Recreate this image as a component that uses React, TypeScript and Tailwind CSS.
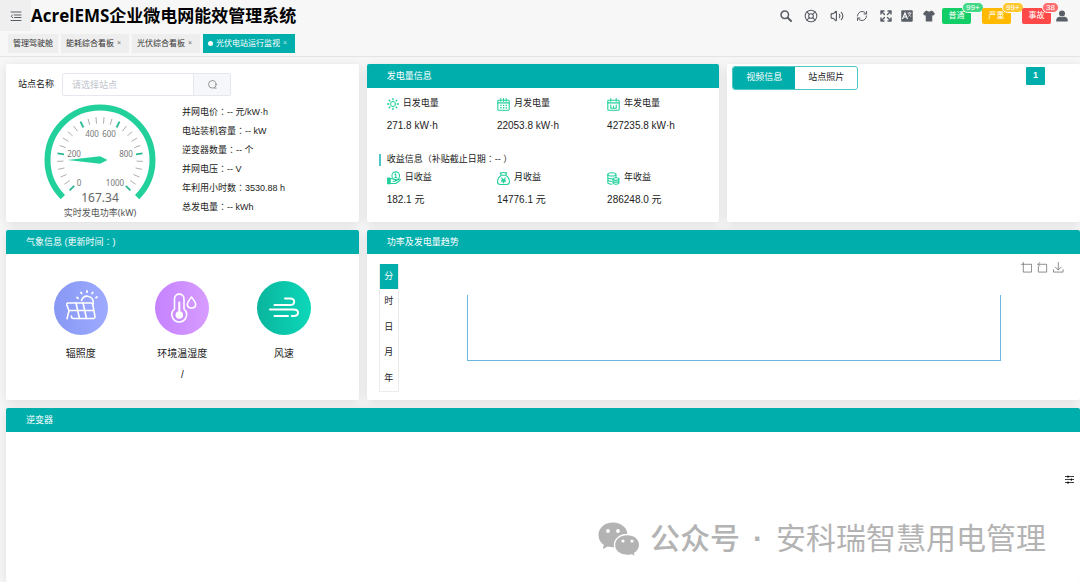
import { useState } from "react";
import type { ReactNode } from "react";
import { LifeBuoy, RefreshCw, Volume2 } from "lucide-react";
import clsx from "clsx";

const TABS = [
  { name: "管理驾驶舱", closable: false },
  { name: "能耗综合看板", closable: true },
  { name: "光伏综合看板", closable: true },
  { name: "光伏电站运行监视", closable: true },
];

const ALARMS = [
  { name: "普通", count: "99+", tag: "bg-[#13ce66]", badge: "bg-[#42d885]" },
  { name: "严重", count: "99+", tag: "bg-[#ffba00]", badge: "bg-[#ffc833]" },
  { name: "事故", count: "38", tag: "bg-[#ff4949]", badge: "bg-[#ff6d6d]" },
];

const STATION_INFO = [
  { label: "并网电价", value: "-- 元/kW·h" },
  { label: "电站装机容量", value: "-- kW" },
  { label: "逆变器数量", value: "-- 个" },
  { label: "并网电压", value: "-- V" },
  { label: "年利用小时数", value: "3530.88 h" },
  { label: "总发电量", value: "-- kWh" },
];

const PERIODS = ["分", "时", "日", "月", "年"];

function Svg({ box = 24, className, width = 2, children }: { box?: number; className: string; width?: number; children: ReactNode }) {
  return (
    <svg
      viewBox={`0 0 ${box} ${box}`}
      className={clsx("shrink-0", className)}
      fill="none"
      stroke="currentColor"
      strokeWidth={width}
      strokeLinecap="round"
      strokeLinejoin="round"
      aria-hidden="true"
    >
      {children}
    </svg>
  );
}

const SearchIcon = () => (
  <Svg className="size-3" width={3}>
    <circle cx="9.5" cy="9.5" r="7.5" />
    <path d="M15.500 15.500l6.500 6.500" strokeWidth="4" />
  </Svg>
);

const FullscreenIcon = () => (
  <Svg className="size-3" width={2.8}>
    <path d="M2 8V2h6M2 2l7 7M16 2h6v6M22 2l-7 7M2 16v6h6M2 22l7-7M22 16v6h-6M22 22l-7-7" />
  </Svg>
);

const LanguageIcon = () => (
  <svg viewBox="0 0 24 24" className="size-3" aria-hidden="true">
    <rect x="0.5" y="0.5" width="23" height="23" rx="2" fill="currentColor" />
    <path d="M3 18L8 6l5 12M5 14h6" fill="none" stroke="#fff" strokeWidth="2.4" />
    <path d="M13 6h8M17 4v2M19.500 6c-1 4-3 6-5 7M14.500 6.500c1 3 3 5.500 6 6.500" fill="none" stroke="#fff" strokeWidth="1.300" />
  </svg>
);

const ShirtIcon = () => (
  <svg viewBox="0 0 24 24" className="size-3" fill="currentColor" aria-hidden="true">
    <path d="M8 1c1 2.600 7 2.600 8 0l4 1.500L24 8l-4 3.500-1.500-1V23h-13V10.500l-1.500 1L0 8l4-5.500z" />
  </svg>
);

const UserIcon = () => (
  <svg viewBox="0 0 24 24" className="size-3" fill="currentColor" aria-hidden="true">
    <circle cx="12" cy="7" r="6" />
    <path d="M0.500 23v-3c0-4 3-6.500 7-6.500 3 1.300 6 1.300 9 0 4 0 7 2.500 7 6.500v3z" />
  </svg>
);

const SunIcon = () => (
  <Svg className="size-3">
    <circle cx="12" cy="12" r="5" />
    <path d="M12 1v2.500M12 20.500V23M1 12h2.500M20.500 12H23M4.200 4.200l1.800 1.800M18 18l1.800 1.800M4.200 19.800L6 18M18 6l1.800-1.800" strokeWidth="2.600" />
  </Svg>
);

const MonthIcon = () => (
  <Svg className="size-[13px]">
    <rect x="1.500" y="4" width="21" height="18.500" rx="1.500" />
    <path d="M1.500 9h21M7 1v5M12 1v5M17 1v5" />
    <path d="M6 13.500h2.500M11 13.500h2.500M16 13.500h2.500M6 18h2.500M11 18h2.500M16 18h2.500" strokeLinecap="butt" strokeWidth="2.500" />
  </Svg>
);

const YearIcon = () => (
  <Svg className="size-[13px]">
    <rect x="1.500" y="4" width="21" height="18.500" rx="1.500" />
    <path d="M1.500 9h21M7 1v5M17 1v5M7 13v6M12 15v4M17 13v6M7 19h10" />
  </Svg>
);

const DayIncomeIcon = () => (
  <Svg className="size-[14px]" width={1.8}>
    <circle cx="15" cy="8" r="6.500" />
    <path d="M13.500 6l1.500-1v6M13.500 11h3" />
    <rect x="1" y="12" width="4.500" height="10" fill="currentColor" />
    <path d="M5.500 13.500c4-2 5 1.500 8 1.500 2 0 2 2.500 0 2.500h-3M14.500 17l6-3c2-1 3 1 1.500 2.300L15 21.500H5.500" />
  </Svg>
);

const MonthIncomeIcon = () => (
  <Svg className="size-[13px]">
    <path d="M8 6L6 1.500c2 1 3-.5 6-.5s4 1.500 6 .5L16 6zM8 6C3 9.500 1 14 1 18c0 3.500 1.500 5 5 5h12c3.500 0 5-1.500 5-5 0-4-2-8.500-7-12" />
    <path d="M8.500 11l3.500 4 3.500-4M12 15v5M8.500 15.500h7M8.500 18h7" />
  </Svg>
);

const YearIncomeIcon = () => (
  <Svg className="size-[13px]">
    <ellipse cx="9" cy="4.500" rx="7.500" ry="3" />
    <path d="M1.500 4.500v15c0 1.500 3 3 7 3M16.500 4.500v5M1.500 9.500c0 2 4 3 8 3M1.500 14.500c0 1.500 3 2.600 6.500 2.800" />
    <ellipse cx="16.500" cy="13" rx="5.500" ry="2.500" />
    <path d="M11 13v7c0 3.500 11 3.500 11 0v-7M11 16.500c0 3 11 3 11 0" />
  </Svg>
);

const GENERATION = [
  { icon: <SunIcon />, label: "日发电量", value: "271.8 kW·h" },
  { icon: <MonthIcon />, label: "月发电量", value: "22053.8 kW·h" },
  { icon: <YearIcon />, label: "年发电量", value: "427235.8 kW·h" },
];

const INCOME = [
  { icon: <DayIncomeIcon />, label: "日收益", value: "182.1 元" },
  { icon: <MonthIncomeIcon />, label: "月收益", value: "14776.1 元" },
  { icon: <YearIncomeIcon />, label: "年收益", value: "286248.0 元" },
];

const WEATHER = [
  {
    label: "辐照度",
    value: "",
    bg: "bg-linear-to-r from-[#8798f4] to-[#9eaaff]",
    icon: (
      <Svg box={54} className="size-[54px]" width={1.6}>
        <path d="M14 22h23c1 0 1.500.5 1.700 1.200l2.300 12.300c.2 1-.5 2-1.500 2H19.500c-1.500 0-2.500-1-2-2.500M14 22c-1 0-1.500.8-1.200 1.800l2.200 6-2 8" />
        <path d="M15.500 29.500h24M22 22l3.500 15.500M29 22l3.500 15.500" />
        <path d="M27.500 19.500c1-3 3.500-4.500 6-4.300 3.500.3 6 3 5.800 6.300 0 1-.3 1.800-.8 2.700" />
        <path d="M23 16.500l1 .7M27 11.500l.6 1M33 10v1.200M38.700 11.500l-.6 1M43 16l-1 .7" strokeWidth="1.800" />
      </Svg>
    ),
  },
  {
    label: "环境温湿度",
    value: "/",
    bg: "bg-linear-to-r from-[#c582ff] to-[#d79cff]",
    icon: (
      <Svg box={54} className="size-[54px]" width={1.6}>
        <path d="M19.500 28V18c0-6.500 9.500-6.500 9.500 0v10c5.500 5 1.500 13-4.700 13S13.800 33 19.500 28z" />
        <path d="M24.300 21.500V32" strokeWidth="2" />
        <circle cx="24.300" cy="34" r="3" fill="currentColor" />
        <path d="M36.500 16c3 4 4.200 5.500 4.200 7.200 0 5-8.400 5-8.400 0 0-1.700 1.200-3.200 4.200-7.200z" />
      </Svg>
    ),
  },
  {
    label: "风速",
    value: "",
    bg: "bg-linear-to-r from-[#09b59d] to-[#0cd8b9]",
    icon: (
      <Svg box={54} className="size-[54px]" width={2}>
        <path d="M17.500 24H33c5.500 0 5.500-6.500.5-6.500H28" />
        <path d="M13 28.500h23.500c6 0 6 6.500 0 6.500h-1.800M17.500 35H31" />
      </Svg>
    ),
  },
];

// full-width punctuation centred in its cell
function Mark({ children }: { children: string }) {
  return <span className="font-['Noto_Sans_CJK_TC',sans-serif] leading-none">{children}</span>;
}

function Panel({ title, className, children }: { title?: ReactNode; className?: string; children?: ReactNode }) {
  return (
    <section className={clsx("min-w-0 overflow-hidden rounded-[2px] bg-white shadow-[0_2px_12px_rgba(0,0,0,0.1)]", className)}>
      {title && <h2 className="h-6 bg-[#00aeac] px-5 text-[9px] leading-6 text-white">{title}</h2>}
      {children}
    </section>
  );
}

// point on the gauge dial, angle counted clockwise from the 0 mark
function dial(deg: number, r: number) {
  const a = ((225 - deg) * Math.PI) / 180;
  return { x: 56 + r * Math.cos(a), y: 58 - r * Math.sin(a) };
}

function Gauge({ value, max }: { value: number; max: number }) {
  const start = dial(0, 52.5);
  const end = dial(270, 52.5);
  const labels = [
    { text: "0", x: 35, y: 84 },
    { text: "200", x: 30, y: 55 },
    { text: "400", x: 48, y: 35 },
    { text: "600", x: 65, y: 35 },
    { text: "800", x: 82, y: 55 },
    { text: "1000", x: 71, y: 84 },
  ];
  return (
    <svg viewBox="0 0 112 116" className="h-[116px] w-28 font-['Noto_Sans','Noto_Sans_CJK_SC',sans-serif]" textAnchor="middle">
      <path d={`M${start.x} ${start.y}A52.5 52.5 0 1 1 ${end.x} ${end.y}`} fill="none" stroke="#22d09c" strokeWidth="6" />
      {Array.from({ length: 26 }, (_, i) => {
        const a = dial(i * 10.8, 43);
        const b = dial(i * 10.8, 36.5);
        const major = i % 5 === 0;
        return (
          <line key={i} x1={a.x} y1={a.y} x2={b.x} y2={b.y} stroke={major ? "#2cb893" : "#999"} strokeWidth={major ? 1.8 : 0.8} />
        );
      })}
      {labels.map((l) => (
        <text key={l.text} x={l.x} y={l.y} fontSize="8" fill="#777">
          {l.text}
        </text>
      ))}
      <path
        d="M23.500 58L56 54.200L63.500 58L56 61.800z"
        fill="#22d09c"
        transform={`rotate(${(value / max) * 270 - 45} 56 58)`}
      />
      <text x="56" y="100" fontSize="12" fill="#666">
        {value}
      </text>
      <text x="56" y="114" fontSize="9" fill="#555">
        实时发电功率(kW)
      </text>
    </svg>
  );
}

function Stats({ items }: { items: { icon: ReactNode; label: string; value: string }[] }) {
  return (
    <dl className="grid grid-cols-3 pl-5 pr-0.5">
      {items.map((s) => (
        <div key={s.label}>
          <dt className="flex h-5 items-center gap-1 text-[9px] text-[#222]">
            <span className="text-[#22d09c]">{s.icon}</span>
            {s.label}
          </dt>
          <dd className="mt-0.5 text-[10px] leading-5 text-[#222]">{s.value}</dd>
        </div>
      ))}
    </dl>
  );
}

function Header() {
  const [active, setActive] = useState("光伏电站运行监视");

  return (
    <header className="border-b border-[#e4e4e4] pb-[3px]">
      <div className="flex h-[31px] items-center">
        <button aria-label="菜单" className="flex size-[31px] items-center justify-center bg-[#efefef] text-[#5a5e66]">
          <Svg className="size-3">
            <path d="M2 4h20M9 10h13M9 15h13M2 21h20M5.500 9.500L2.500 12.500l3 3" />
          </Svg>
        </button>
        <h1 className="font-['Open_Sans','Noto_Sans_CJK_SC',sans-serif] text-[17px] font-bold leading-[31px] text-black">
          AcrelEMS企业微电网能效管理系统
        </h1>
        <div className="ml-auto flex items-center pr-3 text-[#5a5e66]">
          <div className="flex items-center gap-3 pr-[9px]">
            <button aria-label="搜索"><SearchIcon /></button>
            <button aria-label="帮助"><LifeBuoy className="size-[14px]" strokeWidth={1.75} /></button>
            <button aria-label="声音"><Volume2 className="size-[14px]" strokeWidth={2} /></button>
            <button aria-label="刷新"><RefreshCw className="size-3" strokeWidth={2} /></button>
            <button aria-label="全屏"><FullscreenIcon /></button>
          </div>
          <div className="flex items-center gap-2.5 pr-[7px]">
            <button aria-label="语言"><LanguageIcon /></button>
            <button aria-label="主题"><ShirtIcon /></button>
          </div>
          <div className="flex gap-[11px] pr-[5px]">
            {ALARMS.map((a) => (
              <button key={a.name} className={clsx("relative h-4 w-[29px] rounded-[2px] text-[8px] leading-4 text-white", a.tag)}>
                {a.name}
                <span className={clsx("absolute -top-1.5 left-5 h-[11px] rounded-full border border-white px-[3px] text-[8px] leading-[9px]", a.badge)}>
                  {a.count}
                </span>
              </button>
            ))}
          </div>
          <button aria-label="用户"><UserIcon /></button>
        </div>
      </div>
      <nav className="mt-[3px] flex gap-[3px] pl-2">
        {TABS.map((t) => (
          <button
            key={t.name}
            onClick={() => setActive(t.name)}
            className={clsx(
              "flex h-[19px] items-center px-[5px] text-[8px]",
              active === t.name ? "bg-[#00aeac] text-white" : "bg-[#eee] text-[#333]"
            )}
          >
            {active === t.name && <span className="mr-[3px] size-[5px] rounded-full bg-white" />}
            {t.name}
            {t.closable && <span className="w-2.5 text-center text-[7px] opacity-70">×</span>}
          </button>
        ))}
      </nav>
    </header>
  );
}

function StationPanel() {
  return (
    <Panel className="px-3 pt-[9px]">
      <div className="flex h-[23px] items-center text-[9px] text-[#222]">
        <label htmlFor="station" className="mr-2">站点名称</label>
        <input
          id="station"
          placeholder="请选择站点"
          className="h-full w-[132px] rounded-l-[2px] border border-[#e4e7ed] px-[9px] outline-none placeholder:text-[#c0c4cc]"
        />
        <button aria-label="查询站点" className="-ml-px flex h-full w-[38px] items-center justify-center rounded-r-[2px] border border-[#e4e7ed] bg-[#f5f7fa] text-[#777]">
          <Svg className="size-[9px]">
            <circle cx="11.500" cy="11.500" r="10" />
            <path d="M17 21.500h5" />
          </Svg>
        </button>
      </div>
      <div className="flex pt-1.5">
        <div className="flex w-[164px] justify-center">
          <Gauge value={167.34} max={1000} />
        </div>
        <ul className="pt-px text-[9px] text-[#222]">
          {STATION_INFO.map((s) => (
            <li key={s.label} className="h-[19px] leading-[19px]">
              {s.label}
              <Mark>：</Mark>
              {s.value}
            </li>
          ))}
        </ul>
      </div>
    </Panel>
  );
}

function VideoPanel() {
  return (
    <Panel>
      <div className="flex items-start justify-between pl-[5px] pr-[35px] pt-0.5">
        <div className="flex h-6 overflow-hidden rounded-[3px] border border-[#4cc6c4] text-[9px]">
          <button className="bg-[#00aeac] px-[13px] text-white">视频信息</button>
          <button className="px-[13px] text-[#222]">站点照片</button>
        </div>
        <button className="mt-px h-[18px] w-[19px] rounded-[1px] bg-[#00aeac] text-[9px] font-bold text-white">1</button>
      </div>
    </Panel>
  );
}

function TrendPanel() {
  const [period, setPeriod] = useState("分");

  return (
    <Panel title="功率及发电量趋势" className="col-span-2">
      <div className="flex px-3 py-2">
        <div className="mt-0.5 flex h-32 w-5 flex-col border border-t-0 border-[#ebebeb]">
          {PERIODS.map((p) => (
            <button
              key={p}
              onClick={() => setPeriod(p)}
              className={clsx("flex-1 text-[9px]", p === period ? "bg-[#00aeac] text-white" : "text-[#222]")}
            >
              {p}
            </button>
          ))}
        </div>
        <div className="flex flex-1 flex-col pl-0.5">
          <div className="flex h-[33px] justify-end gap-[5px] pr-1 text-[#777]">
            <Svg className="size-[11px]" width={1.800}>
              <path d="M5 0v22h18V5H0" />
            </Svg>
            <Svg className="size-[11px]" width={1.800}>
              <path d="M3 10v12h18V5H2M6 1L2 5l4 4" />
            </Svg>
            <Svg className="size-[11px]" width={1.800}>
              <path d="M1 17v5h21v-5M11.500 1v16M5 11l6.500 6.500L18 11" />
            </Svg>
          </div>
          <div className="mx-[10%] h-[66px] border border-t-0 border-[#6bb8de]" />
        </div>
      </div>
    </Panel>
  );
}

function Watermark() {
  return (
    <div className="pointer-events-none absolute bottom-[23px] right-[34px] flex items-center text-[30px] leading-10 text-[#b3b3b3]">
      <svg viewBox="0 0 42 34" className="mr-2.5 h-[34px] w-[42px]" aria-hidden="true">
        <path d="M15 0.500C6.500 0.500 0.500 6 0.500 13c0 4.300 2 7.500 5.300 9.800L4.800 27l5-2.600c1.700.5 3.500.8 5.200.8 8.500 0 14.500-5.500 14.500-12.300S23.500.5 15 .5z" fill="currentColor" />
        <path d="M29.300 12.500c-7.300 0-12.800 4.600-12.800 10.500s5.500 10.500 12.800 10.500c1.500 0 3-.2 4.300-.6l4 2-1-3.500c3-2 5-5 5-8.400 0-5.900-5-10.500-12.300-10.500z" fill="currentColor" stroke="#fff" strokeWidth="1.300" />
        <g fill="#fff">
          <circle cx="10" cy="9" r="1.900" />
          <circle cx="20" cy="9" r="1.900" />
          <circle cx="25" cy="19" r="1.600" />
          <circle cx="34" cy="19" r="1.600" />
        </g>
      </svg>
      <span className="font-medium">公众号</span>
      <span className="w-9 text-center font-bold">·</span>
      <span>安科瑞智慧用电管理</span>
    </div>
  );
}

export default function App() {
  return (
    <div className="relative flex min-h-screen flex-col overflow-hidden bg-[#f7f7f7] font-['Liberation_Sans','Noto_Sans_CJK_SC',sans-serif]">
      <Header />
      <main className="flex flex-1 flex-col gap-2 pl-1.5 pt-[7px]">
        <div className="grid grid-cols-3 gap-2">
          <StationPanel />
          <Panel title="发电量信息" className="pb-3">
            <div className="pt-1.5">
              <Stats items={GENERATION} />
            </div>
            <h3 className="mt-[15px] flex h-[17px] items-center whitespace-pre pl-3 text-[9px] text-[#222]">
              <span className="mr-1.5 h-3 w-0.5 bg-[#4cc6c4]" />
              <span>
                收益信息<Mark>（</Mark>补贴截止日期<Mark>：</Mark>-- <Mark>）</Mark>
              </span>
            </h3>
            <Stats items={INCOME} />
          </Panel>
          <VideoPanel />
        </div>
        <div className="grid grid-cols-3 gap-2">
          <Panel title={<>气象信息 (更新时间<Mark>：</Mark>)</>}>
            <div className="grid grid-cols-3 px-6 pt-[27px]">
              {WEATHER.map((w) => (
                <div key={w.label} className="flex flex-col items-center text-[10px] text-[#222]">
                  <span className={clsx("rounded-full text-white", w.bg)}>{w.icon}</span>
                  <span className="mt-[9px] leading-5">{w.label}</span>
                  <span className="mt-px leading-5">{w.value}</span>
                </div>
              ))}
            </div>
          </Panel>
          <TrendPanel />
        </div>
        <Panel title="逆变器" className="flex flex-1 flex-col">
          <button aria-label="设置" className="ml-auto mr-1.5 mt-[43px] text-black">
            <Svg className="size-[9px]" width={2}>
              <path d="M1 4h22M1 12h22M1 20h22" />
              <path d="M8 3v2M17 11v2M8 19v2" strokeWidth="4" />
            </Svg>
          </button>
        </Panel>
      </main>
      <Watermark />
    </div>
  );
}
